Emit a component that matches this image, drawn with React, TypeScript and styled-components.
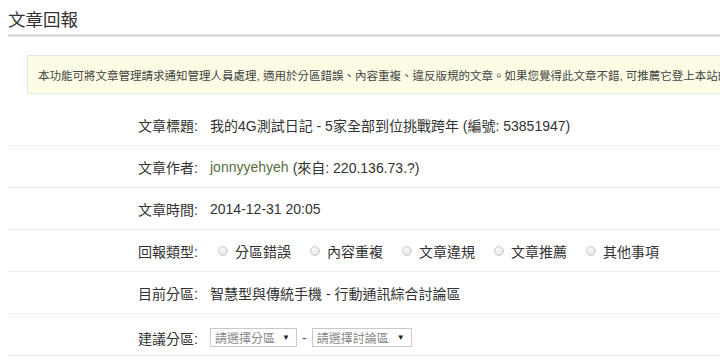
import React from 'react';
import styled, { createGlobalStyle } from 'styled-components';

const GlobalStyle = createGlobalStyle`
  html, body {
    margin: 0;
    padding: 0;
    background: #fff;
    overflow: hidden;
  }
  body {
    font-family: "Liberation Sans", Arial, "Noto Sans CJK TC", sans-serif;
    color: #333;
  }
`;

const Page = styled.div`
  width: 720px;
  padding: 8px 0 0 8px;
  box-sizing: border-box;
`;

const Title = styled.h2`
  margin: 0;
  font-size: 17.5px;
  font-weight: normal;
  line-height: 24px;
  color: #333;
  padding-bottom: 2px;
  border-bottom: 3px solid #dedede;
`;

const Notice = styled.div`
  margin: 18px 0 0 19px;
  height: 37px;
  padding: 0 0 0 10px;
  display: flex;
  align-items: center;
  background: #fdfde6;
  border: 1px solid #e6e6e6;
  border-right: none;
  font-size: 11.5px;
  color: #444;
  white-space: nowrap;
  overflow: hidden;
`;

const Form = styled.div`
  margin-top: 10px;
`;

const Row = styled.div<{ $shift?: number }>`
  display: flex;
  align-items: center;
  height: 42px;
  padding-top: ${p => p.$shift || 0}px;
  box-sizing: border-box;
  border-bottom: 1px solid #eeeeee;
  font-size: 14px;
`;

const Label = styled.div`
  width: 190px;
  text-align: right;
  color: #333;
  flex-shrink: 0;
`;

const Value = styled.div`
  margin-left: 12px;
  display: flex;
  align-items: center;
  white-space: nowrap;
  color: #333;
`;

const Author = styled.a`
  color: #56703e;
  text-decoration: none;
  margin-right: 4px;
`;

const Option = styled.label`
  display: flex;
  align-items: center;
  margin-right: 19px;
  &:first-child {
    margin-left: 8px;
  }
`;

const Dot = styled.span`
  width: 8px;
  height: 8px;
  border-radius: 50%;
  border: 1px solid #cfcfcf;
  background: radial-gradient(circle at 40% 35%, #fbfbfb, #dadada);
  margin-right: 7px;
`;

const Select = styled.div<{ $width: number }>`
  width: ${p => p.$width}px;
  height: 19px;
  box-sizing: border-box;
  border: 1px solid #c9c9c9;
  display: flex;
  align-items: center;
  justify-content: space-between;
  padding: 0 6px 0 4px;
  font-size: 12px;
  color: #8a8a8a;
  background: #fff;
  &::after {
    content: '▼';
    font-size: 8px;
    color: #222;
  }
`;

const Dash = styled.span`
  margin: 0 5px;
  color: #555;
`;

const types = ['分區錯誤', '內容重複', '文章違規', '文章推薦', '其他事項'];

export default function App() {
  return (
    <Page>
      <GlobalStyle />
      <Title>文章回報</Title>
      <Notice>
        本功能可將文章管理請求通知管理人員處理, 適用於分區錯誤、內容重複、違反版規的文章。如果您覺得此文章不錯, 可推薦它登上本站的首頁。
      </Notice>
      <Form>
        <Row>
          <Label>文章標題:</Label>
          <Value>我的4G測試日記 - 5家全部到位挑戰跨年 (編號: 53851947)</Value>
        </Row>
        <Row>
          <Label>文章作者:</Label>
          <Value>
            <Author href="#">jonnyyehyeh</Author>(來自: 220.136.73.?)
          </Value>
        </Row>
        <Row>
          <Label>文章時間:</Label>
          <Value>2014-12-31 20:05</Value>
        </Row>
        <Row>
          <Label>回報類型:</Label>
          <Value>
            {types.map(t => (
              <Option key={t}>
                <Dot />
                {t}
              </Option>
            ))}
          </Value>
        </Row>
        <Row>
          <Label>目前分區:</Label>
          <Value>智慧型與傳統手機 - 行動通訊綜合討論區</Value>
        </Row>
        <Row $shift={6}>
          <Label>建議分區:</Label>
          <Value>
            <Select $width={87}>請選擇分區</Select>
            <Dash>-</Dash>
            <Select $width={100}>請選擇討論區</Select>
          </Value>
        </Row>
      </Form>
    </Page>
  );
}
